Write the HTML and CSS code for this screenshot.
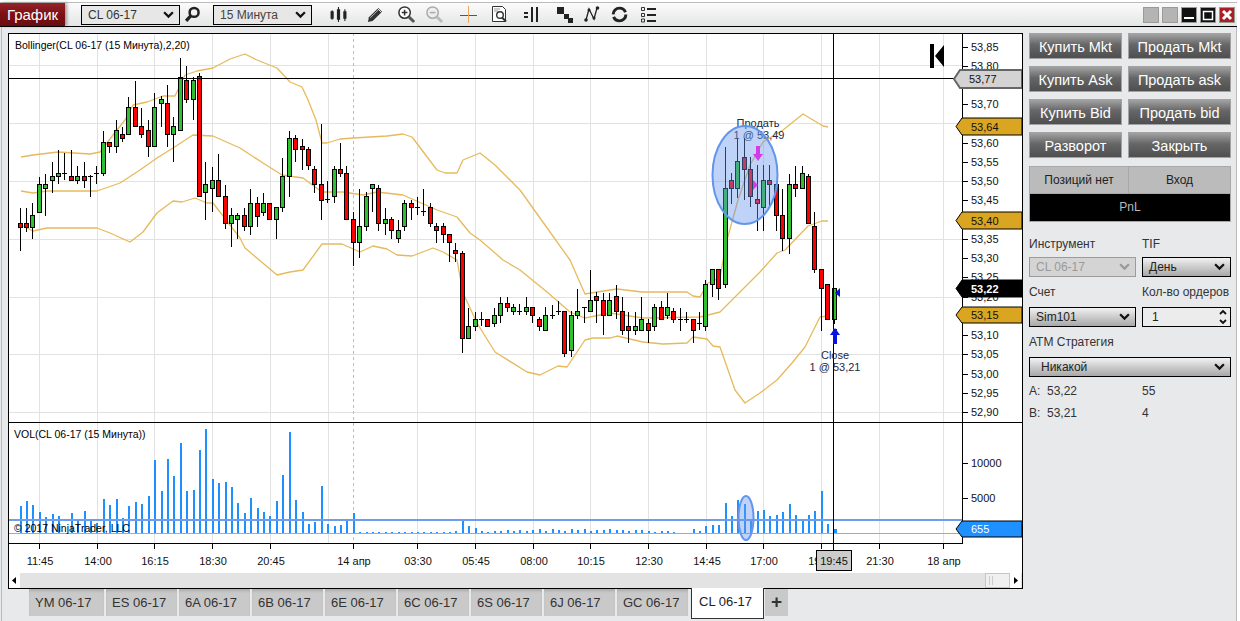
FILE: index.html
```html
<!DOCTYPE html>
<html lang="ru">
<head>
<meta charset="utf-8">
<title>График</title>
<link rel="stylesheet" href="styles.css">
</head>
<body>
<div class="strip"><span class="strip-text">ПОСТАВЛЯЕМЫЕ ФИНАНСЫ</span></div>
<div class="app">
  <header class="toolbar">
    <div class="brand">График</div>
    <div class="select flat sel-a"><span>CL 06-17</span><svg class="chev" viewBox="0 0 10 7"><path d="M1 1l4 4 4-4"/></svg></div>
    <svg class="ico search" viewBox="0 0 16 16"><circle cx="9.5" cy="6" r="4.2" fill="none" stroke="#222" stroke-width="2.4"/><path d="M6.5 9l-4.5 5" stroke="#222" stroke-width="3"/></svg>
    <div class="select flat sel-b"><span>15 Минута</span><svg class="chev" viewBox="0 0 10 7"><path d="M1 1l4 4 4-4"/></svg></div>
    <div class="tools">
      <svg class="ico" viewBox="0 0 16 16"><path d="M2 4v9M8 1v14M14 3v11" stroke="#222" stroke-width="1"/><path d="M2 5v7M8 3v10M14 5v7" stroke="#222" stroke-width="3"/></svg>
      <svg class="ico" viewBox="0 0 18 18"><path d="M2 12L12 2l4 4L6 16l-5 1z" fill="#333"/><path d="M3.500 12.500l9-9" stroke="#bbb"/><path d="M11 2.500l4.500 4.500" stroke="#f0f0f0"/></svg>
      <svg class="ico big" viewBox="0 0 20 20"><circle cx="8" cy="8" r="6" fill="#fff" stroke="#333" stroke-width="1.6"/><path d="M5 8h6M8 5v6" stroke="#333" stroke-width="1.6"/><path d="M12.5 12.5l5.5 5.5" stroke="#555" stroke-width="3"/></svg>
      <svg class="ico big" viewBox="0 0 20 20"><circle cx="8" cy="8" r="6" fill="#eee" stroke="#aaa" stroke-width="1.6"/><path d="M5 8h6" stroke="#aaa" stroke-width="1.6"/><path d="M12.5 12.5l5.5 5.5" stroke="#bbb" stroke-width="3"/></svg>
      <svg class="ico" viewBox="0 0 17 17"><path d="M0 9.500h17" stroke="#555"/><path d="M8.500 0v17" stroke="#e8a860"/></svg>
      <svg class="ico" viewBox="0 0 17 17"><path d="M1.500 .5h10l3 3v12h-13z" fill="#fff" stroke="#333"/><path d="M3 3h6M3 5h4" stroke="#999"/><circle cx="9" cy="9" r="3.300" fill="none" stroke="#333" stroke-width="1.400"/><path d="M11 11.500l4 4" stroke="#333" stroke-width="2"/></svg>
      <svg class="ico" viewBox="0 0 17 17"><path d="M1 6h4v2H1zM1 10h4v2H1z" fill="#222"/><path d="M9 1v15M14 1v15" stroke="#222" stroke-width="2"/></svg>
      <svg class="ico" viewBox="0 0 17 17"><path d="M1 1h7v7H1zM8 8h5v5H8zM12 12h5v5h-5z" fill="#222"/></svg>
      <svg class="ico" viewBox="0 0 17 17"><path d="M3 14L6 3l5 10 3-11" fill="none" stroke="#222" stroke-width="1.300"/><circle cx="3" cy="14" r="1.800" fill="#222"/><circle cx="6" cy="4" r="1.500" fill="#222"/><circle cx="11" cy="12" r="1.500" fill="#222"/><circle cx="14.500" cy="2" r="1.800" fill="#222"/></svg>
      <svg class="ico" viewBox="0 0 16 16"><circle cx="8" cy="8" r="6" fill="none" stroke="#222" stroke-width="2.800" stroke-dasharray="16 2.500 16 3"/></svg>
      <svg class="ico" viewBox="0 0 17 17"><path d="M1.500 1.500h3v3h-3zM1.500 7.500h3v3h-3zM1.500 13h3v3h-3z" fill="none" stroke="#333"/><path d="M7 3h9M7 9h9M7 15h9" stroke="#222" stroke-width="2"/></svg>
    </div>
    <div class="winbtns">
      <span class="winbtn blank"></span>
      <span class="winbtn blank"></span>
      <span class="winbtn dark"><svg viewBox="0 0 14 14"><path d="M2 10h10" stroke="#fff" stroke-width="2"/></svg></span>
      <span class="winbtn dark"><svg viewBox="0 0 14 14"><path d="M2.500 3.500h9v8h-9z" fill="none" stroke="#fff" stroke-width="1.500"/></svg></span>
      <span class="winbtn close"><svg viewBox="0 0 14 14"><path d="M3 3l8 8M11 3l-8 8" stroke="#fff" stroke-width="3"/></svg></span>
    </div>
  </header>

  <main class="main">
    <div class="chart-col">
      <svg id="chart" class="chart" viewBox="8 33 1015 556" xmlns="http://www.w3.org/2000/svg"></svg>
      <nav class="tabs">
        <span class="tab first">YM 06-17</span>
        <span class="tab">ES 06-17</span>
        <span class="tab">6A 06-17</span>
        <span class="tab">6B 06-17</span>
        <span class="tab">6E 06-17</span>
        <span class="tab">6C 06-17</span>
        <span class="tab">6S 06-17</span>
        <span class="tab">6J 06-17</span>
        <span class="tab">GC 06-17</span>
        <span class="tab active">CL 06-17</span>
        <span class="tab add">+</span>
      </nav>
    </div>

    <aside class="panel">
      <div class="trade-grid">
        <button class="trade">Купить Mkt</button>
        <button class="trade">Продать Mkt</button>
        <button class="trade">Купить Ask</button>
        <button class="trade">Продать ask</button>
        <button class="trade">Купить Bid</button>
        <button class="trade">Продать bid</button>
        <button class="trade">Разворот</button>
        <button class="trade">Закрыть</button>
      </div>
      <div class="position">
        <div class="pos-cell">Позиций нет</div>
        <div class="pos-cell">Вход</div>
        <div class="pnl">PnL</div>
      </div>
      <div class="form">
        <label class="field-label short">Инструмент</label>
        <label class="field-label short">TIF</label>
        <div class="select disabled"><span>CL 06-17</span><svg class="chev" viewBox="0 0 10 7"><path d="M1 1l4 4 4-4"/></svg></div>
        <div class="select"><span>День</span><svg class="chev" viewBox="0 0 10 7"><path d="M1 1l4 4 4-4"/></svg></div>
        <label class="field-label">Счет</label>
        <label class="field-label">Кол-во ордеров</label>
        <div class="select row2"><span>Sim101</span><svg class="chev" viewBox="0 0 10 7"><path d="M1 1l4 4 4-4"/></svg></div>
        <div class="spin row2"><span>1</span><svg class="spin-arrows" viewBox="0 0 10 16"><path d="M2 5l3-3 3 3M2 11l3 3 3-3"/></svg></div>
        <label class="field-label wide">ATM Стратегия</label>
        <div class="select wide strat"><span>Никакой</span><svg class="chev" viewBox="0 0 10 7"><path d="M1 1l4 4 4-4"/></svg></div>
      </div>
      <div class="quotes">
        <span>A:&nbsp; 53,22</span><span>55</span>
        <span>B:&nbsp; 53,21</span><span>4</span>
      </div>
    </aside>
  </main>
</div>
<script src="app.js"></script>
</body>
</html>
```
FILE: styles.css
```css
* { box-sizing: border-box; }
html, body { margin: 0; padding: 0; }
body {
  width: 1240px;
  height: 621px;
  overflow: hidden;
  background: #fff;
  font: 12px "Liberation Sans", Arial, sans-serif;
  color: #333;
}
.strip {
  height: 2px;
  overflow: hidden;
  padding-left: 75px;
}
.strip-text {
  display: block;
  margin-top: -9px;
  font-size: 12px;
  line-height: 11px;
  color: #222;
  letter-spacing: 1px;
}
.app {
  width: 1237px;
  height: 619px;
  background: #e8e9ea;
  border-top: 1px solid #bbb;
}
.toolbar {
  display: flex;
  align-items: center;
  height: 24px;
  background: linear-gradient(#fbfbfb, #e4e5e5);
  border-bottom: 1px solid #000;
}
.brand {
  width: 65px;
  height: 23px;
  background: linear-gradient(#93242a, #7c1014 50%, #6a0d10);
  color: #fff;
  font-size: 15px;
  line-height: 23px;
  text-align: center;
  box-shadow: 2px 0 3px rgba(0, 0, 0, .35);
  flex: none;
}
.select {
  display: flex;
  align-items: center;
  justify-content: space-between;
  height: 20px;
  padding: 0 5px 0 6px;
  border: 1px solid #000;
  background: linear-gradient(#f2f2f2, #cfcfcf 45%, #a8a8a8);
  color: #222;
  font-size: 12px;
}
.flat { background: #e7e7e7; width: 99px; flex: none; }
.sel-a { margin-left: 16px; color: #333; }
.sel-b { margin-left: 8px; color: #444; }
.chev { width: 11px; height: 8px; fill: none; stroke: #111; stroke-width: 2; flex: none; }
.ico { display: block; width: 17px; height: 17px; justify-self: center; flex: none; }
.ico.big { width: 19px; height: 19px; }
.search { margin-left: 4px; margin-right: 4px; }
.tools {
  display: grid;
  grid-template-columns: 36px 38px 24px 32px 36px 26px 38px 28px 26px 30px 28px;
  align-items: center;
  margin-left: 8px;
}
.winbtns { display: flex; gap: 3px; margin-left: auto; margin-right: 2px; }
.winbtn {
  display: block;
  width: 16px;
  height: 16px;
  border: 1px solid #9a9a9a;
}
.winbtn svg { display: block; width: 14px; height: 14px; }
.winbtn.blank { background: #b6b3b3; }
.winbtn.dark { background: #111; }
.winbtn.close { background: #a81f24; }

.main {
  display: flex;
  height: 594px;
  margin-left: 1px;
  border-left: 1px solid #bbb;
  border-right: 1px solid #bbb;
  padding-top: 6px;
}
.chart-col { width: 1021px; flex: none; padding-left: 6px; }
.chart { display: block; width: 1015px; height: 556px; background: #fff; }
.chart text { font: 11px "Liberation Sans", Arial, sans-serif; fill: #111; }
.chart text.label { font-size: 10.5px; fill: #000; }
.chart text.mark { fill: #1c2a44; text-anchor: middle; }
.chart text.tag-w { fill: #fff; }
.chart text.tag-b { fill: #fff; font-weight: bold; }
.chart text.mid { text-anchor: middle; }

.tabs { display: flex; align-items: flex-start; gap: 2px; padding-left: 21px; }
.tab {
  display: block;
  width: 71px;
  height: 27px;
  padding-left: 6px;
  background: #c9c9c9;
  box-shadow: inset 0 3px 3px -1px rgba(0, 0, 0, .14);
  color: #333;
  font-size: 13px;
  line-height: 28px;
}
.tab.first { width: 75px; }
.tab.active {
  width: 73px;
  height: 31px;
  margin-left: 1px;
  margin-top: -1px;
  padding-left: 7px;
  background: #fff;
  border: 1px solid #333;
  border-top: 0;
  box-shadow: none;
  color: #222;
}
.tab.add {
  width: 23px;
  margin-left: -1px;
  padding: 0;
  text-align: center;
  color: #333;
  font-size: 19px;
  font-weight: bold;
  line-height: 26px;
  box-shadow: none;
}

.panel { width: 202px; margin-left: 6px; flex: none; }
.trade-grid {
  display: grid;
  grid-template-columns: 93px 103px;
  grid-auto-rows: 26px;
  column-gap: 6px;
  row-gap: 7px;
}
.trade {
  margin: 0;
  padding: 1px 0 0;
  border: 1px solid #a3a3a3;
  background: linear-gradient(#a2a2a2, #666 45%, #4f4f4f);
  color: #fff;
  font: 14.5px "Liberation Sans", Arial, sans-serif;
}
.position {
  display: grid;
  grid-template-columns: 100px 102px;
  grid-template-rows: 28px 28px;
  margin-top: 8px;
}
.pos-cell {
  background: #bbb;
  color: #222;
  line-height: 26px;
  text-align: center;
  border: 1px solid #a8a8a8;
}
.pos-cell + .pos-cell { border-left: 0; }
.pnl {
  grid-column: 1 / 3;
  background: #000;
  color: #bbb;
  line-height: 27px;
  text-align: center;
  border: 1px solid #a8a8a8;
  border-top: 0;
}
.form {
  display: grid;
  grid-template-columns: 107px 89px;
  column-gap: 6px;
  margin-top: 13px;
  grid-auto-rows: min-content;
}
.field-label { height: 24px; line-height: 18px; color: #333; }
.field-label.short { height: 22px; }
.form .select { margin-bottom: 6px; }
.form .row2 { margin-bottom: 6px; }
.form .wide { grid-column: 1 / 3; }
.form .strat { margin-bottom: 3px; padding-left: 11px; }
.select.disabled {
  background: #d4d4d4;
  border-color: #9b9b9b;
  color: #9a9a9a;
}
.select.disabled .chev { stroke: #999; }
.spin {
  display: flex;
  align-items: center;
  justify-content: space-between;
  height: 20px;
  padding: 0 2px 0 9px;
  border: 1px solid #000;
  background: #ececec;
  font-size: 12px;
  color: #222;
}
.spin-arrows { width: 10px; height: 16px; fill: none; stroke: #111; stroke-width: 1.8; }
.quotes {
  display: grid;
  grid-template-columns: 113px 89px;
  grid-auto-rows: 22px;
  line-height: 22px;
  color: #333;
}
```
FILE: app.js
```js
// Candles: [wick high, wick low, body top, body bottom, type], in page pixels.
var C = [
[208,251,223,227,'r'],[208,232,223,227,'r'],[203,239,215,227,'g'],[177,212,184,212,'g'],[174,216,184,188,'g'],
[162,193,176,180,'g'],[150,184,173,176,'g'],[153,180,173,173,'d'],[150,180,176,180,'r'],[166,184,176,180,'g'],
[162,188,176,180,'r'],[175,197,176,176,'d'],[166,184,173,173,'d'],[131,176,142,173,'g'],[142,153,142,146,'r'],
[120,153,130,146,'g'],[127,142,134,138,'r'],[97,134,107,134,'g'],[81,126,107,126,'r'],[108,138,126,134,'r'],
[120,157,130,146,'r'],[93,146,107,146,'g'],[96,127,99,103,'g'],[85,147,103,134,'r'],[117,162,126,134,'g'],
[58,130,77,130,'g'],[66,103,80,99,'r'],[77,120,80,99,'g'],[73,196,76,196,'r'],[162,220,184,192,'g'],
[167,212,180,188,'g'],[154,197,180,196,'r'],[185,229,196,223,'r'],[208,247,215,223,'g'],[213,239,215,219,'g'],
[208,231,215,226,'r'],[189,235,203,226,'g'],[197,227,203,216,'r'],[193,216,203,212,'g'],[203,219,203,219,'r'],
[207,239,207,219,'g'],[158,212,176,207,'g'],[131,197,138,176,'g'],[135,162,138,149,'r'],[139,170,146,149,'r'],
[147,170,149,165,'r'],[166,193,169,184,'r'],[124,220,184,200,'r'],[181,203,199,199,'d'],[166,203,169,196,'g'],
[143,177,169,173,'r'],[166,219,173,219,'r'],[212,266,219,242,'r'],[189,258,226,242,'g'],[192,231,196,226,'g'],
[184,212,184,188,'g'],[185,231,188,223,'r'],[208,235,219,223,'g'],[217,239,219,230,'r'],[220,243,230,238,'g'],
[200,231,203,226,'g'],[200,220,203,207,'r'],[197,215,207,207,'d'],[189,216,211,211,'d'],[203,227,207,223,'r'],
[223,243,226,230,'r'],[223,243,226,234,'r'],[234,262,234,242,'r'],[243,262,250,253,'r'],[251,353,253,338,'r'],
[308,338,326,338,'g'],[312,331,319,326,'g'],[312,326,319,319,'d'],[319,326,319,326,'r'],[308,327,315,323,'g'],
[297,323,303,315,'g'],[297,312,303,307,'r'],[304,315,307,311,'g'],[304,315,311,311,'d'],[297,315,307,311,'g'],
[307,323,307,315,'r'],[317,331,319,326,'r'],[307,330,315,330,'g'],[305,319,315,315,'d'],[301,315,311,311,'d'],
[311,357,311,353,'r'],[311,357,315,350,'g'],[289,319,311,315,'g'],[307,323,307,307,'d'],[270,311,300,311,'g'],
[292,323,296,300,'r'],[293,335,300,315,'r'],[293,315,300,315,'g'],[285,319,296,311,'r'],[297,335,311,330,'r'],
[312,343,326,330,'r'],[312,335,326,330,'g'],[297,330,319,330,'g'],[319,343,323,330,'r'],[304,331,307,326,'g'],
[301,319,307,319,'r'],[293,319,307,315,'g'],[308,323,311,319,'r'],[308,331,319,319,'d'],[312,323,319,319,'d'],
[319,343,319,330,'r'],[312,330,323,323,'d'],[280,331,284,326,'g'],[269,297,269,284,'g'],[269,300,269,288,'r'],
[147,288,188,284,'g'],[173,204,180,188,'r'],[138,198,161,188,'g'],[138,200,157,169,'r'],[157,207,169,196,'r'],
[165,231,199,203,'r'],[165,231,180,207,'g'],[165,207,180,184,'r'],[184,231,184,215,'r'],[189,251,215,238,'r'],
[174,254,184,238,'g'],[166,197,184,188,'r'],[166,188,173,188,'g'],[174,223,176,223,'r'],[212,273,226,269,'r'],
[269,331,269,288,'r'],[284,319,284,319,'r'],[288,324,288,319,'g']
];
// Volume bar tops in page pixels, one per candle; base is y=533.
var V = [506,501,505,512,517,514,516,533,513,520,511,520,523,499,505,499,518,506,502,504,496,460,491,459,476,443,491,490,450,429,
479,483,482,487,503,513,498,508,512,516,501,475,432,500,512,524,522,486,524,526,525,520,513,532,532,532,532,532,532,532,
532,532,532,532,532,532,532,532,531,521,526,528,531,532,531,531,530,531,530,531,530,529,531,529,530,531,529,530,529,531,
530,530,529,530,530,531,530,530,531,532,531,531,532,533,533,529,531,526,525,525,503,516,500,504,520,511,510,516,515,512,
504,515,521,515,511,491,524,529];

var UPPER = [[21,157],[33,155],[58,152],[90,154],[100,152],[113,135],[125,120],[133,105],[147,102],[163,96],[175,96],[185,75],[197,71],[213,68],[230,59],[245,54],[257,60],[277,68],[290,82],[302,87],[308,100],[316,120],[322,143],[327,143],[340,139],[353,138],[387,136],[403,134],[412,137],[437,170],[445,173],[457,173],[463,160],[480,153],[495,165],[520,190],[545,225],[570,260],[585,294],[597,292],[617,289],[642,292],[687,292],[693,296],[700,297],[708,283],[715,280],[720,277],[727,240],[738,200],[750,165],[763,142],[783,130],[803,114],[823,126],[828,127]];
var MID = [[21,191],[33,193],[47,191],[97,191],[120,183],[140,170],[157,158],[173,148],[193,135],[213,136],[240,148],[263,163],[282,175],[303,178],[322,192],[343,192],[363,195],[377,192],[403,195],[437,210],[457,217],[470,233],[480,240],[503,260],[520,270],[547,292],[570,312],[585,318],[610,313],[643,318],[700,317],[720,312],[740,292],[760,272],[777,253],[785,250],[808,226],[822,221],[828,221]];
var LOWER = [[21,225],[33,231],[47,228],[97,228],[110,233],[130,242],[143,232],[157,213],[173,201],[182,202],[195,198],[207,203],[213,203],[240,238],[245,248],[277,275],[290,272],[303,270],[322,244],[342,244],[360,252],[373,246],[387,249],[397,255],[412,256],[433,248],[443,252],[457,260],[463,293],[477,323],[495,352],[527,372],[540,375],[558,366],[567,367],[585,340],[593,338],[610,338],[617,336],[643,342],[663,344],[687,343],[693,337],[707,339],[713,346],[720,347],[735,390],[745,403],[760,393],[777,380],[792,363],[805,347],[820,317],[828,316]];

var PRICES = [['53,85',47],['53,80',66],['53,70',104],['53,60',143],['53,55',162],['53,50',181],['53,45',200],['53,35',239],['53,30',258],['53,25',277],['53,20',297],['53,10',335],['53,05',354],['53,00',374],['52,95',393],['52,90',412]];
var TIMES = [['11:45',39],['14:00',97],['16:15',154],['18:30',212],['20:45',270],['14 апр',353],['03:30',417],['05:45',475],['08:00',533],['10:15',590],['12:30',648],['14:45',706],['17:00',763],['19:30',821],['21:30',879],['18 апр',943]];
var VGRID = [39,97,154,212,270,328,417,475,533,590,648,706,763,821,879,943];
var HGRID = [65,123,181,239,297,354,412];

var o = [];
function line(x1, y1, x2, y2, col, w, extra) {
  o.push('<line x1="' + x1 + '" y1="' + y1 + '" x2="' + x2 + '" y2="' + y2 + '" stroke="' + col + '" stroke-width="' + (w || 1) + '"' + (extra || '') + '/>');
}
function text(x, y, s, cls) {
  o.push('<text x="' + x + '" y="' + y + '"' + (cls ? ' class="' + cls + '"' : '') + '>' + s + '</text>');
}
function colX(i) { return Math.floor(20 + 6.41 * i); }
function poly(pts, w) {
  o.push('<polyline fill="none" stroke="#e6ba5c" stroke-width="' + w + '" stroke-linejoin="round" points="' + pts.map(function (p) { return p.join(','); }).join(' ') + '"/>');
}
function tag(x0, yT, yB, fill, edge, label, cls, w, tx) {
  var m = (yT + yB) / 2;
  o.push('<polygon points="' + x0 + ',' + m + ' ' + (x0 + 6) + ',' + yT + ' 1022,' + yT + ' 1022,' + yB + ' ' + (x0 + 6) + ',' + yB + '" fill="' + fill + '" stroke="' + edge + '" stroke-width="' + (w || 1) + '"/>');
  text(tx || 971, m + 4, label, cls);
}

// grid
VGRID.forEach(function (x) { line(x + .5, 33, x + .5, 543, '#e2e2e2'); });
HGRID.forEach(function (y) { line(9, y + .5, 962, y + .5, '#e2e2e2'); });
line(353.5, 33, 353.5, 543, '#bdbdbd', 1, ' stroke-dasharray="3 3"');

// Bollinger bands
poly(UPPER, 1.3); poly(MID, 1.3); poly(LOWER, 1.3);

// candles
C.forEach(function (c, i) {
  var x = colX(i);
  line(x + .5, c[0], x + .5, c[1], '#000');
  if (c[4] === 'd') {
    line(x - 2, c[2] + .5, x + 3, c[2] + .5, '#000');
  } else {
    o.push('<rect x="' + (x - 1.5) + '" y="' + (c[2] + .5) + '" width="4" height="' + (c[3] - c[2]) + '" fill="' + (c[4] === 'g' ? '#2fc02f' : '#ff0000') + '" stroke="#000"/>');
  }
});

// volume
V.forEach(function (top, i) {
  var x = colX(i);
  var w = i === 127 ? 3 : 2;
  if (top < 533) o.push('<rect x="' + x + '" y="' + top + '" width="' + w + '" height="' + (533 - top) + '" fill="#1e90ff"/>');
});
line(9, 533.5, 962, 533.5, '#aaa');
line(9, 520, 962, 520, '#6d9eee', 2);

// labels
text(15, 49, 'Bollinger(CL 06-17 (15 Минута),2,20)', 'label');
text(14, 438, 'VOL(CL 06-17 (15 Минута))', 'label');
text(14, 532, '© 2017 NinjaTrader, LLC', 'label');

// crosshair
line(9, 78.5, 955, 78.5, '#000');
line(833.5, 33, 833.5, 550, '#000');

// execution markers
text(758, 127, 'Продать', 'mark');
text(759, 139, '1 @ 53,49', 'mark');
text(835, 359, 'Close', 'mark');
text(835, 371, '1 @ 53,21', 'mark');
o.push('<path d="M833 329h4v15h-4z" fill="#0a12e0"/><path d="M830 335l5-7 5 7z" fill="#0a12e0"/><path d="M835 293l5-5v9z" fill="#0a12e0"/>');

// annotations
o.push('<ellipse cx="745" cy="175" rx="32.500" ry="49" fill="#6495ed" fill-opacity=".42" stroke="#6495ed" stroke-width="2"/>');
o.push('<ellipse cx="746" cy="518" rx="7.500" ry="22" fill="#6495ed" fill-opacity=".42" stroke="#6495ed" stroke-width="2"/>');
o.push('<path d="M756 146h4v8h3l-5 7-5-7h3z" fill="#d63ae8"/><path d="M753 180v10l5-5z" fill="#d63ae8"/>');
o.push('<path d="M930 44h4v24h-4zM935 56l9-11v22z" fill="#000"/>');

// frame and axes
line(9, 422.5, 1022, 422.5, '#000');
line(9, 543.5, 962, 543.5, '#000');
line(962.5, 33, 962.5, 544, '#000');
PRICES.forEach(function (p) { line(963, p[1] + .5, 968, p[1] + .5, '#000'); text(971, p[1] + 4, p[0]); });
line(963, 463.5, 968, 463.5, '#000'); text(971, 467, '10000');
line(963, 498.5, 968, 498.5, '#000'); text(971, 502, '5000');
TIMES.forEach(function (t) {
  line(t[1] + .5, 544, t[1] + .5, 549, '#000');
  text(t[1] + 1, 565, t[0], 'mid');
});

// price tags
tag(954, 70, 88, '#d3d3d3', '#666', '53,77', '', 2, 969);
tag(956, 118, 135, '#daa520', '#000', '53,64');
tag(956, 212, 229, '#daa520', '#000', '53,40');
tag(956, 280, 297, '#000', '#000', '53,22', 'tag-b');
tag(956, 307, 323, '#daa520', '#000', '53,15');
tag(956, 521, 537, '#1e90ff', '#000', '655', 'tag-w');

// crosshair time label
o.push('<rect x="816.500" y="550.500" width="35" height="20" fill="#ccc" stroke="#000"/>');
text(834, 565, '19:45', 'mid');

// scrollbar
o.push('<rect x="9" y="573" width="1013" height="15" fill="#e3e3e3"/>');
o.push('<rect x="9" y="573" width="11" height="15" fill="#fff"/><path d="M12 580.500l4-3.500v7z" fill="#000"/>');
o.push('<rect x="985.500" y="573.500" width="24" height="14" fill="#f0f0f0" stroke="#c6c6c6"/><path d="M989.500 576v9M992.500 576v9" stroke="#ccc"/>');
o.push('<rect x="1010" y="573" width="11" height="15" fill="#fff"/><path d="M1018 580.500l-4-3.500v7z" fill="#000"/>');
o.push('<rect x="8.500" y="33.500" width="1014" height="555" fill="none" stroke="#000"/>');

document.getElementById('chart').innerHTML = o.join('');
```
